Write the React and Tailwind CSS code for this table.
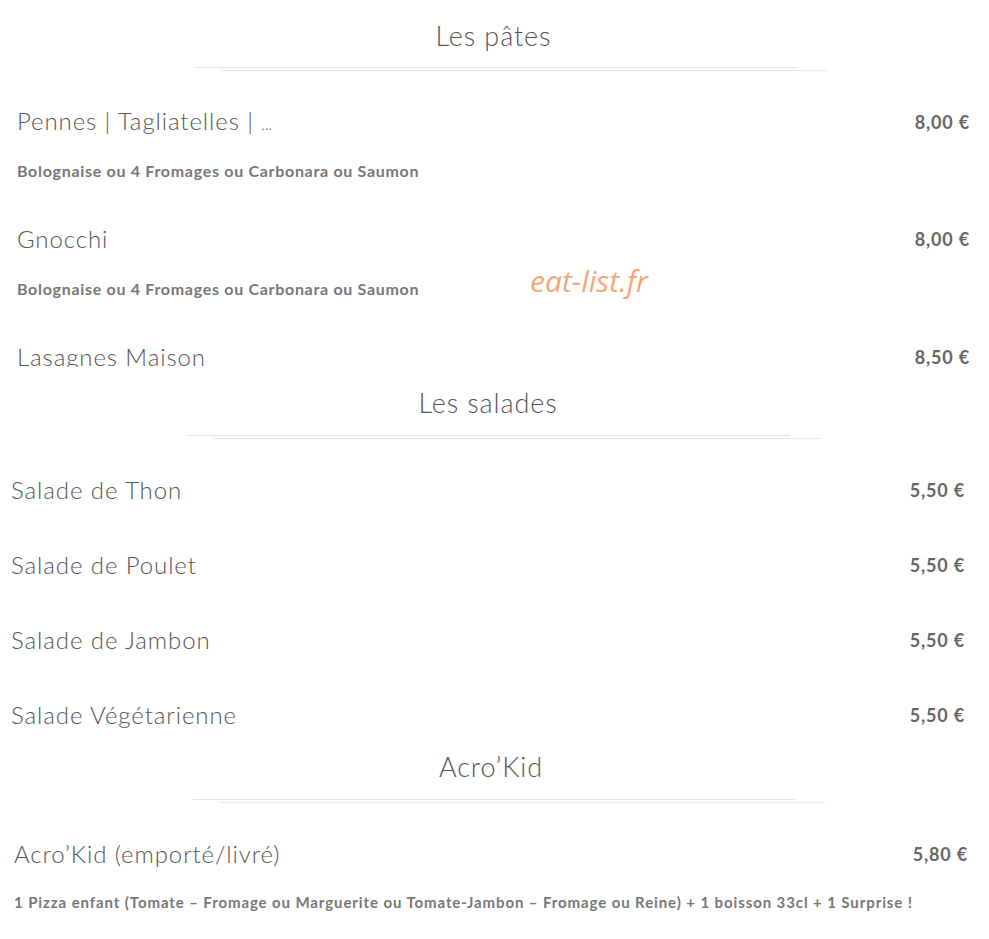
import React from 'react';

const pates = [
  { name: 'Pennes | Tagliatelles | ', more: '…', price: '8,00 €', desc: 'Bolognaise ou 4 Fromages ou Carbonara ou Saumon' },
  { name: 'Gnocchi', price: '8,00 €', desc: 'Bolognaise ou 4 Fromages ou Carbonara ou Saumon' },
  { name: 'Lasagnes Maison', price: '8,50 €' },
];

const salades = ['Salade de Thon', 'Salade de Poulet', 'Salade de Jambon', 'Salade Végétarienne'];

// double hairline under each section title
const Divider = ({ className = '' }) => (
  <div className={`w-[632px] flex flex-col ${className}`}>
    <div className="h-px w-[602px] bg-[#e4e4e4]" />
    <div className="h-px w-[606px] ml-[26px] mt-[2px] bg-[#e9e9e9]" />
  </div>
);

const Title = ({ children }) => (
  <div className="text-center text-[27px] leading-[32px] font-light tracking-[0.9px] text-[#555]">{children}</div>
);

const Row = ({ name, more, price, className = '' }) => (
  <div className={`flex justify-between items-center h-[30px] ${className}`}>
    <span className="text-[24px] font-light tracking-[0.9px] text-[#555] leading-[30px] whitespace-pre">
      {name}
      {more && <span className="text-[15px]">{more}</span>}
    </span>
    <span className="text-[18px] font-bold tracking-[0.8px] text-[#666]">{price}</span>
  </div>
);

const Desc = ({ children, className = '' }) => (
  <div className={`leading-[20px] font-bold text-[#777] ${className}`}>{children}</div>
);

export default function App() {
  return (
    <div className="relative w-[989px] h-[939px] bg-white overflow-hidden" style={{ fontFamily: 'Lato, "Open Sans", sans-serif' }}>
      {/* Les pâtes */}
      <div className="h-[367px] overflow-hidden pl-[17px] pr-[19px] pt-[20px]">
        <Title>Les pâtes</Title>
        <Divider className="mt-[15px] ml-[178px]" />
        <Row name={pates[0].name} more={pates[0].more} price={pates[0].price} className="mt-[36px]" />
        <Desc className="mt-[24px] text-[16px] tracking-[0.7px]">{pates[0].desc}</Desc>
        <Row name={pates[1].name} price={pates[1].price} className="mt-[43px]" />
        <Desc className="mt-[25px] text-[16px] tracking-[0.7px]">{pates[1].desc}</Desc>
        <Row name={pates[2].name} price={pates[2].price} className="mt-[43px]" />
      </div>

      {/* Les salades */}
      <div className="h-[364px] pl-[11px] pr-[24px] pt-[20px]">
        <Title>Les salades</Title>
        <Divider className="mt-[16px] ml-[177px]" />
        <div className="mt-[36px] flex flex-col gap-[45px]">
          {salades.map((s) => (
            <Row key={s} name={s} price="5,50 €" />
          ))}
        </div>
      </div>

      {/* Acro'Kid */}
      <div className="pl-[14px] pr-[21px] pt-[20px]">
        <Title>Acro’Kid</Title>
        <Divider className="mt-[16px] ml-[179px]" />
        <Row name="Acro’Kid (emporté/livré)" price="5,80 €" className="mt-[36px]" />
        <Desc className="mt-[23px] text-[15px] tracking-[0.9px] text-[#666]">
          1 Pizza enfant (Tomate – Fromage ou Marguerite ou Tomate-Jambon – Fromage ou Reine) + 1 boisson 33cl + 1 Surprise !
        </Desc>
      </div>

      <div
        className="absolute left-[530px] top-[258px] text-[30px] italic text-[#f2a878]"
        style={{ fontFamily: '"Open Sans", sans-serif' }}
      >
        eat-list.fr
      </div>
    </div>
  );
}
